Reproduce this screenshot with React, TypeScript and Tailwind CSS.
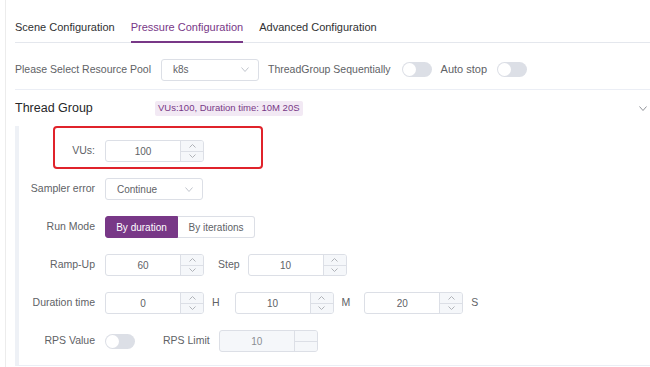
import React from "react";

const Chevron = ({ dir = "down", w = 7, h = 4, color = "#b0b3b8" }: { dir?: "up" | "down"; w?: number; h?: number; color?: string }) => (
  <svg width={w} height={h} viewBox={`0 0 ${w} ${h}`} fill="none">
    {dir === "down" ? (
      <polyline points={`0.5,0.5 ${w / 2},${h - 0.5} ${w - 0.5},0.5`} stroke={color} strokeWidth="1" />
    ) : (
      <polyline points={`0.5,${h - 0.5} ${w / 2},0.5 ${w - 0.5},${h - 0.5}`} stroke={color} strokeWidth="1" />
    )}
  </svg>
);

const InputNumber = ({ value, disabled = false }: { value: string; disabled?: boolean }) => (
  <div
    className={`w-[99px] h-[22px] border border-[#dcdfe6] rounded-[3px] flex overflow-hidden shrink-0 ${
      disabled ? "bg-[#f5f7fa]" : "bg-white"
    }`}
  >
    <div className={`flex-1 flex items-center justify-center text-[10px] ${disabled ? "text-[#8a8d93]" : "text-[#606266]"}`}>
      {value}
    </div>
    <div className="w-[23px] border-l border-[#dcdfe6] bg-[#f5f7fa] flex flex-col">
      <div className="flex-1 flex items-center justify-center">
        {!disabled && <Chevron dir="up" w={7} h={4} />}
      </div>
      <div className="flex-1 flex items-center justify-center border-t border-[#dcdfe6]">
        {!disabled && <Chevron dir="down" w={7} h={4} />}
      </div>
    </div>
  </div>
);

const Select = ({ value }: { value: string }) => (
  <div className="w-[98px] h-[22px] border border-[#dcdfe6] rounded-[3px] bg-white flex items-center pl-[11px] pr-[9px] shrink-0">
    <span className="flex-1 text-[10px] text-[#606266]">{value}</span>
    <Chevron dir="down" w={8} h={5} color="#c0c4cc" />
  </div>
);

const Toggle = () => (
  <div className="w-[30px] h-[15px] rounded-full bg-[#dcdfe6] flex items-center pl-[1px] shrink-0">
    <div className="w-[13px] h-[13px] rounded-full bg-white" />
  </div>
);

const Label = ({ children }: { children: React.ReactNode }) => (
  <div className="w-[76px] mr-[10px] text-right text-[10.5px] text-[#606266] shrink-0 whitespace-nowrap">{children}</div>
);

export default function App() {
  return (
    <div className="w-[650px] h-[367px] bg-white overflow-hidden pl-[5px] font-['Liberation_Sans',Arial,sans-serif]">
      <div className="h-full border-l border-[#ececec] pl-[9px]">
        {/* Tabs */}
        <div className="h-[43px] flex gap-4 border-b border-[#e4e7ed]">
          <div className="h-[43px] pt-[13px] flex items-center text-[11px] text-[#303133] border-b-2 border-transparent">
            Scene Configuration
          </div>
          <div className="h-[43px] pt-[13px] flex items-center text-[11px] text-[#783887] border-b-2 border-[#783887]">
            Pressure Configuration
          </div>
          <div className="h-[43px] pt-[13px] flex items-center text-[11px] text-[#303133] border-b-2 border-transparent">
            Advanced Configuration
          </div>
        </div>

        {/* Resource pool row */}
        <div className="h-[47px] pt-[7px] flex items-center border-b border-[#ebeef5] text-[10.5px] text-[#606266]">
          <span className="whitespace-nowrap">Please Select Resource Pool</span>
          <div className="ml-[10px]">
            <Select value="k8s" />
          </div>
          <span className="ml-[9px] whitespace-nowrap">ThreadGroup Sequentially</span>
          <div className="ml-[11px]">
            <Toggle />
          </div>
          <span className="ml-[9px] whitespace-nowrap text-[11px]">Auto stop</span>
          <div className="ml-[10px]">
            <Toggle />
          </div>
        </div>

        {/* Thread group header */}
        <div className="h-[36px] flex items-center">
          <div className="w-[140px] text-[12.5px] text-[#262729]">Thread Group</div>
          <div className="h-[15px] px-[3px] rounded-[2px] bg-[#f2e9f4] text-[#783887] text-[9.5px] flex items-center whitespace-nowrap">
            VUs:100, Duration time: 10M 20S
          </div>
          <div className="ml-auto mr-[3px]">
            <Chevron dir="down" w={8} h={5} color="#909399" />
          </div>
        </div>

        {/* Panel */}
        <div className="relative border-l-4 border-l-[#eef1f6] border-b border-b-[#ebeef5] pt-[14px] pb-[13px] flex flex-col gap-[16px]">
          <div className="absolute left-[34px] top-0 w-[210px] h-[43px] border-2 border-[#e0232b] rounded-[4px]" />

          <div className="h-[22px] flex items-center">
            <Label>VUs:</Label>
            <InputNumber value="100" />
          </div>

          <div className="h-[22px] flex items-center">
            <Label>Sampler error</Label>
            <Select value="Continue" />
          </div>

          <div className="h-[22px] flex items-center">
            <Label>Run Mode</Label>
            <div className="flex h-[22px]">
              <div className="w-[73px] h-full bg-[#783887] text-white text-[10px] flex items-center justify-center rounded-l-[3px] border border-[#783887]">
                By duration
              </div>
              <div className="w-[77px] h-full bg-white text-[#606266] text-[10px] flex items-center justify-center rounded-r-[3px] border border-l-0 border-[#dcdfe6]">
                By iterations
              </div>
            </div>
          </div>

          <div className="h-[22px] flex items-center text-[10.5px] text-[#606266]">
            <Label>Ramp-Up</Label>
            <InputNumber value="60" />
            <span className="ml-[14px] mr-[8px]">Step</span>
            <InputNumber value="10" />
          </div>

          <div className="h-[22px] flex items-center text-[10.5px] text-[#606266]">
            <Label>Duration time</Label>
            <InputNumber value="0" />
            <span className="ml-[8px] mr-[15px]">H</span>
            <InputNumber value="10" />
            <span className="ml-[8px] mr-[14px]">M</span>
            <InputNumber value="20" />
            <span className="ml-[8px]">S</span>
          </div>

          <div className="h-[22px] flex items-center text-[10.5px] text-[#606266]">
            <Label>RPS Value</Label>
            <Toggle />
            <span className="ml-[28px] mr-[9px]">RPS Limit</span>
            <InputNumber value="10" disabled />
          </div>
        </div>
      </div>
    </div>
  );
}
